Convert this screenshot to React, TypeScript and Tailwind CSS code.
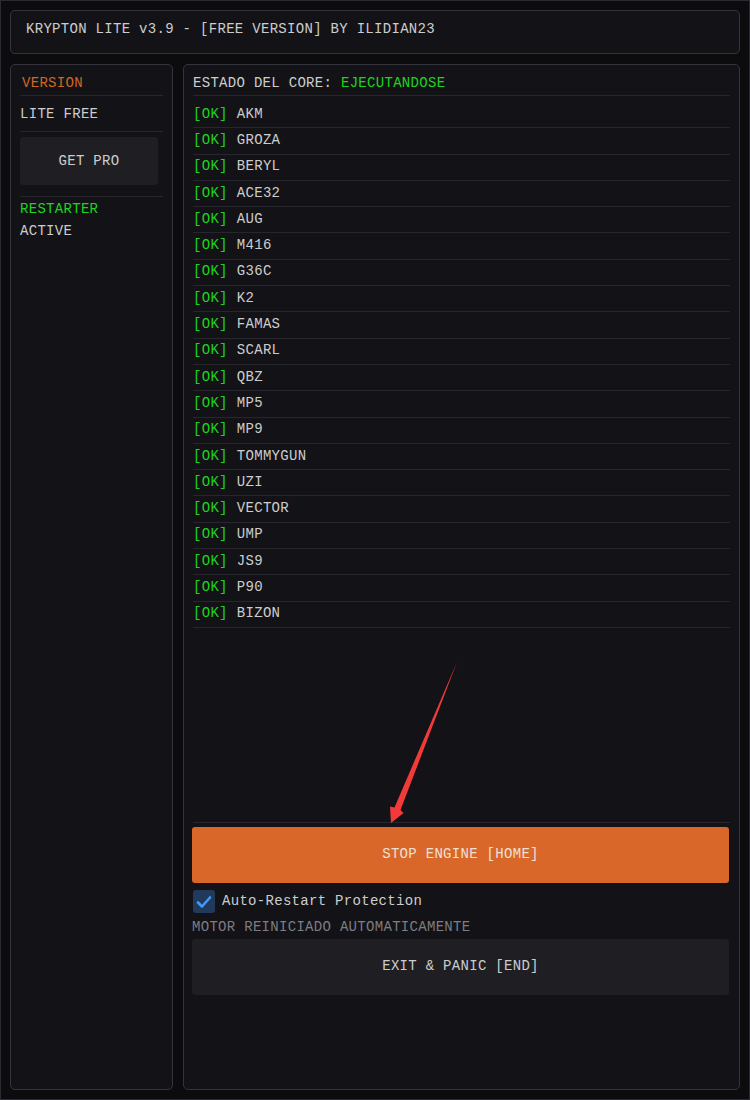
import React from 'react'

const WEAPONS = [
  'AKM', 'GROZA', 'BERYL', 'ACE32', 'AUG', 'M416', 'G36C', 'K2', 'FAMAS', 'SCARL',
  'QBZ', 'MP5', 'MP9', 'TOMMYGUN', 'UZI', 'VECTOR', 'UMP', 'JS9', 'P90', 'BIZON'
]

const Separator: React.FC<{ className?: string }> = ({ className = '' }) => (
  <div className={`h-px bg-[#26262c] ${className}`} />
)

const Arrow: React.FC = () => (
  <svg className="pointer-events-none absolute left-0 top-0" width="750" height="1100" viewBox="0 0 750 1100">
    <polygon
      points="456,661 399.5,809 402.5,812 390,822 389,805.5 393.5,806.5"
      fill="#f23a3a"
    />
  </svg>
)

export default function App() {
  return (
    <div
      className="relative flex h-[1100px] w-[750px] flex-col gap-[10px] border border-[#2b2b33] bg-[#0c0c0e] p-[9px] text-[14px] tracking-[0.3px] text-[#cdcdcd]"
      style={{ fontFamily: '"Liberation Mono", "DejaVu Sans Mono", monospace' }}
    >
      {/* Title bar */}
      <div className="h-[44px] shrink-0 rounded-[5px] border border-[#34343c] bg-[#131317] px-[15px] pt-[9px] leading-[18px]">
        KRYPTON LITE v3.9 - [FREE VERSION] BY ILIDIAN23
      </div>

      <div className="flex h-[1026px] gap-[10px]">
        {/* Sidebar */}
        <aside className="flex w-[163px] shrink-0 flex-col rounded-[5px] border border-[#34343c] bg-[#131317] px-[9px] pt-[9px]">
          <div className="pl-[2px] leading-[18px] text-[#d2661f]">VERSION</div>
          <Separator className="mt-[3px]" />
          <div className="mt-[9px] leading-[18px]">LITE FREE</div>
          <Separator className="mt-[8px]" />
          <button className="mt-[5px] h-[48px] w-[138px] rounded-[3px] bg-[#1f1f23] text-[#cdcdcd]">
            GET PRO
          </button>
          <Separator className="mt-[11px]" />
          <div className="mt-[3px] leading-[18px] text-[#1ed31e]">RESTARTER</div>
          <div className="mt-[4px] leading-[18px]">ACTIVE</div>
        </aside>

        {/* Main panel */}
        <main className="flex flex-1 flex-col rounded-[5px] border border-[#34343c] bg-[#131317] pl-[9px] pr-[9px] pt-[9px]">
          <div className="leading-[18px]">
            ESTADO DEL CORE: <span className="text-[#1ed31e]">EJECUTANDOSE</span>
          </div>
          <Separator className="mt-[3px]" />

          <ul className="mt-[6px]">
            {WEAPONS.map((name) => (
              <li key={name} className="flex h-[26.3px] items-center border-b border-[#26262c] pb-px">
                <span className="text-[#1ed31e]">[OK]</span>
                <span className="ml-[9px]">{name}</span>
              </li>
            ))}
          </ul>

          <Separator className="mt-[194px]" />
          <button className="-ml-px mt-[4px] h-[56px] w-[537px] rounded-[3px] bg-[#d9672a] text-[#eee0d6]">
            STOP ENGINE [HOME]
          </button>

          <label className="mt-[7px] flex h-[24px] items-center gap-[7px]">
            <span className="flex h-[23px] w-[22px] items-center justify-center rounded-[3px] bg-[#213a5c]">
              <svg width="16" height="14" viewBox="0 0 16 14">
                <path d="M2 7.5 L6 11.5 L14 2.5" fill="none" stroke="#4298f5" strokeWidth="2.6" strokeLinecap="round" strokeLinejoin="round" />
              </svg>
            </span>
            <span>Auto-Restart Protection</span>
          </label>

          <div className="-ml-px mt-[5px] leading-[16px] text-[#7d7d82]">MOTOR REINICIADO AUTOMATICAMENTE</div>

          <button className="-ml-px mt-[4px] h-[56px] w-[537px] rounded-[3px] bg-[#1f1f23] text-[#cdcdcd]">
            EXIT &amp; PANIC [END]
          </button>
        </main>
      </div>

      <Arrow />
    </div>
  )
}
